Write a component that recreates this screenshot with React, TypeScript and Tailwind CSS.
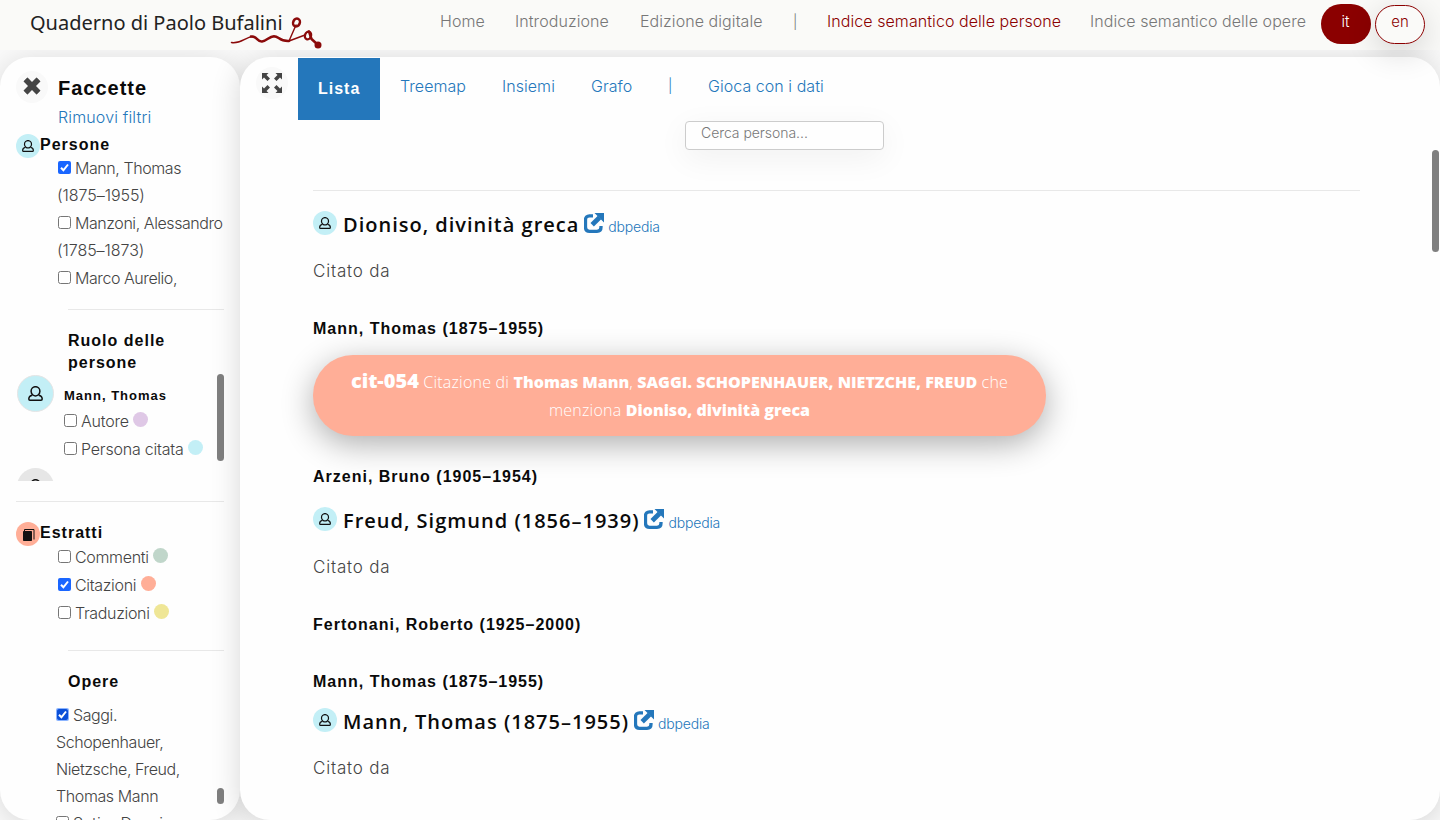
import React from "react";

const LIGHT = "font-['Inter','Liberation_Sans',sans-serif] font-light";
const BOLD = "font-['Liberation_Sans',Arial,sans-serif] font-bold tracking-[1px] text-[#0a0a0a]";

function PersonIcon({ className }: { className: string }) {
  return (
    <svg viewBox="0 0 15 15" className={className} fill="none" stroke="#111" strokeWidth="1.5">
      <path d="M4.9 9C3.7 8.1 3.1 6.8 3.1 5.2a4.4 4.5 0 0 1 8.8 0c0 1.600-.6 2.900-1.800 3.800-.8.600-1.600.9-2.600.9s-1.800-.3-2.600-.9z" />
      <path d="M4.300 9.200C2 9.700.800 11 .8 13c0 .8.400 1.200 1.200 1.200h11c.8 0 1.200-.4 1.200-1.200 0-2-1.200-3.300-3.500-3.800" />
    </svg>
  );
}

function BookIcon() {
  return (
    <svg viewBox="0 0 12 12" className="mt-0.5 ml-px size-3" fill="none" stroke="#111">
      <path d="M.5 2.500h8v9h-8z" fill="#111" />
      <path d="M1.500 2V.500h9.500v10" />
    </svg>
  );
}

function OpenIcon() {
  return (
    <svg viewBox="0 0 20 20" className="size-5" fill="none" stroke="#2477bb">
      <path d="M9 2.800H5.500c-2.500 0-4 1.500-4 4v7.500c0 2.500 1.500 4 4 4h7.500c2.500 0 4-1.500 4-4V13" strokeWidth="3.300" />
      <path d="M8.200 11.800 15.500 4.500" strokeWidth="4.800" />
      <path d="M10.500 0H20v9.500z" fill="#2477bb" stroke="none" />
    </svg>
  );
}

function RemoveIcon() {
  return (
    <svg viewBox="0 0 18 18" className="mb-0.5 size-[18px]">
      <path d="M4 .8.800 4q-.4.400 0 .8L5 9 .800 13.200q-.4.400 0 .8L4 17.200q.4.400.8 0L9 13l4.200 4.200q.4.400.8 0l3.200-3.200q.4-.4 0-.8L13 9l4.200-4.200q.4-.4 0-.8L14 .8q-.4-.4-.8 0L9 5 4.800.8Q4.400.4 4 .8z" fill="#444" />
    </svg>
  );
}

function FullscreenIcon() {
  return (
    <svg viewBox="0 0 20 20" className="size-5" fill="#444">
      <path d="M0 0h6.500L4.500 2 8 5.500 5.500 8 2 4.500 0 6.500z" />
      <path d="M0 0h6.500L4.500 2 8 5.500 5.500 8 2 4.500 0 6.500z" transform="rotate(90 10 10)" />
      <path d="M0 0h6.500L4.500 2 8 5.500 5.500 8 2 4.500 0 6.500z" transform="rotate(180 10 10)" />
      <path d="M0 0h6.500L4.500 2 8 5.500 5.500 8 2 4.500 0 6.500z" transform="rotate(270 10 10)" />
    </svg>
  );
}

function Check({ on = false, focus = false }: { on?: boolean; focus?: boolean }) {
  return (
    <svg viewBox="0 0 13 13" className="mr-1 inline-block size-[13px] align-[0px]">
      {on ? (
        <>
          <rect width="13" height="13" rx="2" fill={focus ? "#8bb4ff" : "#1a66ff"} />
          {focus && <rect x="1" y="1" width="11" height="11" rx="2" fill="#0b50d8" />}
          <path d="M3 6.800 5.400 9.300 10 3.500" fill="none" stroke="#fff" strokeWidth="2" />
        </>
      ) : (
        <rect x=".5" y=".5" width="12" height="12" rx="2" fill="#fff" stroke="#767676" />
      )}
    </svg>
  );
}

function Dot({ color }: { color: string }) {
  return <span className={`ml-[4.5px] inline-block size-[15px] rounded-full align-[0px] ${color}`} />;
}

function Entry({ name }: { name: string }) {
  return (
    <>
      <div className="flex h-11 items-center">
        <span className="mb-1 flex size-6 items-center justify-center rounded-full bg-[#c3eff6]">
          <PersonIcon className="size-3" />
        </span>
        <h2 className="ml-1.5 font-['Open_Sans',sans-serif] text-[20px] font-semibold tracking-[1px] text-[#0a0a0a]">{name}</h2>
        <span className="mb-1 ml-[4.5px]">
          <OpenIcon />
        </span>
        <a className={`${LIGHT} mt-0.5 ml-[4.5px] text-[14px] tracking-[-0.2px] text-[#2477bb]`}>dbpedia</a>
      </div>
      <p className={`${LIGHT} flex h-[46px] items-center pt-[3px] text-[17px] tracking-[0.8px] text-[#444]`}>Citato da</p>
    </>
  );
}

function Logo() {
  return (
    <div className="relative h-[50px] w-[300px] pl-[30px]">
      <span className="font-['Noto_Sans',sans-serif] text-[20px] leading-[46px] font-normal whitespace-nowrap text-[#222]">Quaderno di Paolo Bufalini</span>
      <svg viewBox="0 0 96 36" className="absolute top-[14px] left-[229px] h-9 w-24" fill="none" stroke="#8b0a0a" strokeLinecap="round">
        <path d="M2.500 28.500C12 30 16 23 24 22.500" strokeWidth="1.500" />
        <path d="M22 22.500c6-1 6 5.500 11 5 5-.6 7-5 12-5.300 5 0 5 5.300 15 4.800" strokeWidth="2.500" />
        <path d="M60 27 67 11M60 27l16-6" strokeWidth="1.400" />
        <ellipse cx="67.500" cy="8.500" rx="3.300" ry="4" strokeWidth="2.500" transform="rotate(25 67.500 8.500)" />
        <ellipse cx="79" cy="21.500" rx="3" ry="4" strokeWidth="2.300" transform="rotate(20 79 21.500)" />
        <path d="M80 17.500 82.500 25 88 30" strokeWidth="2.500" />
        <circle cx="89" cy="31" r="3.500" fill="#8b0a0a" stroke="none" />
      </svg>
    </div>
  );
}

export default function App() {
  return (
    <div className="relative flex h-[820px] w-[1440px] flex-col overflow-hidden bg-[#fafafa]">
      <header className={`${LIGHT} relative z-10 flex h-[50px] shrink-0 bg-[#fafaf8] text-[16px] text-[#777]`}>
        <Logo />
        <nav className="ml-[140px] flex h-[42px] items-center tracking-[0.07px] whitespace-nowrap">
          <a className="w-[75px]">Home</a>
          <a className="w-[125px]">Introduzione</a>
          <a className="w-[153px]">Edizione digitale</a>
          <a className="w-[34px] text-[14px]">|</a>
          <a className="w-[263px] text-[#8b0000]">Indice semantico delle persone</a>
          <a className="w-[231px]">Indice semantico delle opere</a>
        </nav>
        <a className="mt-1 flex h-10 w-[50px] justify-center rounded-[20px] bg-[#8b0000] pt-[7px] pr-px text-[15px] text-white">it</a>
        <a className="mt-[5px] ml-1 flex h-[39px] w-[50px] justify-center rounded-[20px] border border-[#8b0000] pt-[5px] text-[15px] text-[#8b0000] shadow-[0_8px_32px_rgba(0,0,0,0.16)]">en</a>
      </header>

      <div className="mt-[7px] flex h-[763px]">
        <aside className={`${LIGHT} relative w-60 shrink-0 overflow-hidden rounded-[30px] bg-[#fefefe] text-[16px] tracking-[-0.4px] text-[#444] shadow-[0_4px_30px_rgba(0,0,0,0.14)]`}>
          <div className="flex h-[48px] items-center pt-3 pl-4">
            <span className="flex size-8 items-center justify-center rounded-full bg-[#f9f9f9]">
              <RemoveIcon />
            </span>
            <h1 className={`${BOLD} ml-2.5 pt-0.5 text-[20px]`}>Faccette</h1>
          </div>
          <a className="flex h-[24px] items-center pl-[58px] tracking-[0.15px] text-[#2477bb]">Rimuovi filtri</a>

          <div className="mt-[5px] flex h-6 pl-4">
            <span className="flex size-6 items-center justify-center rounded-full bg-[#c3eff6]">
              <PersonIcon className="size-3" />
            </span>
            <h3 className={`${BOLD} text-[16px] leading-[22px]`}>Persone</h3>
          </div>
          <div className="-mt-[3px] h-[137px] overflow-hidden pl-[58px] leading-[27.400px] tracking-[-0.43px] whitespace-nowrap">
            <p><Check on />Mann, Thomas</p>
            <p className="-ml-px tracking-[-0.05px]">(1875–1955)</p>
            <p><Check />Manzoni, Alessandro</p>
            <p className="-ml-px tracking-[-0.05px]">(1785–1873)</p>
            <p><Check />Marco Aurelio,</p>
          </div>
          <div className="mt-[17px] mr-4 ml-[68px] border-t border-[#e8e8e8]" />

          <h3 className={`${BOLD} mt-[20px] pl-[68px] text-[16px] leading-[22px]`}>Ruolo delle<br />persone</h3>
          <div className="mr-4 ml-4 flex h-[107px]">
            <div className="w-[48px] overflow-hidden pt-[1px] pl-[1px]">
              <span className="flex size-[37px] items-center justify-center rounded-full border border-[#e5e5e5] bg-[#c3eff6]">
                <PersonIcon className="size-[15px]" />
              </span>
              <span className="mt-[56px] flex size-[37px] items-center justify-center rounded-full bg-[#e6e6e6]">
                <PersonIcon className="size-[15px]" />
              </span>
            </div>
            <div className="grow leading-7 tracking-[-0.2px] whitespace-nowrap">
              <p className={`${BOLD} mt-[12px] mb-px text-[13px] leading-[20px]`}>Mann, Thomas</p>
              <p><Check />Autore<Dot color="bg-[#dfc8e6]" /></p>
              <p><Check />Persona citata<Dot color="bg-[#c3eff6]" /></p>
            </div>
            <span className="h-[87px] w-[7px] shrink-0 rounded-full bg-[#7f7f7f]" />
          </div>
          <div className="mx-4 mt-[20px] border-t border-[#e8e8e8]" />

          <div className="mt-[20px] flex h-6 pl-4">
            <span className="flex size-6 items-center justify-center rounded-full bg-[#ffae97]">
              <BookIcon />
            </span>
            <h3 className={`${BOLD} text-[16px] leading-[22px]`}>Estratti</h3>
          </div>
          <div className="-mt-[3px] pl-[58px] leading-7 tracking-[-0.33px]">
            <p><Check />Commenti<Dot color="bg-[#c0d6ca]" /></p>
            <p><Check on />Citazioni<Dot color="bg-[#ffae97]" /></p>
            <p><Check />Traduzioni<Dot color="bg-[#efe696]" /></p>
          </div>
          <div className="mt-[23px] mr-4 ml-[68px] border-t border-[#e8e8e8]" />

          <h3 className={`${BOLD} mt-[20px] pl-[68px] text-[16px] leading-[22px]`}>Opere</h3>
          <div className="mt-[9px] mr-4 flex h-32 pl-14">
            <div className="grow leading-[27px] whitespace-nowrap">
              <p><Check on focus />Saggi.</p>
              <p>Schopenhauer,</p>
              <p>Nietzsche, Freud,</p>
              <p>Thomas Mann</p>
              <p className="tracking-[0.1px]"><Check />Satiro Danzi</p>
            </div>
            <span className="mt-[86px] h-4 w-[7px] shrink-0 rounded-full bg-[#7f7f7f]" />
          </div>
        </aside>

        <main className="relative grow rounded-[30px] bg-[#fefefe] shadow-[0_4px_30px_rgba(0,0,0,0.16)]">
          <div className="flex h-[64px] pt-px pl-4">
            <span className="mt-[9px] flex size-8 items-center justify-center rounded-full bg-[#f9f9f9]">
              <FullscreenIcon />
            </span>
            <a className={`${BOLD} ml-[10px] h-[62px] w-[82px] bg-[#2477bb] pl-5 text-[16px] leading-[61px] text-white!`}>Lista</a>
            <nav className={`${LIGHT} flex h-[55px] items-center pl-5 text-[16px] tracking-[0.05px] whitespace-nowrap text-[#2477bb]`}>
              <a className="w-[102px]">Treemap</a>
              <a className="w-[89px]">Insiemi</a>
              <a className="w-[77px]">Grafo</a>
              <a className="w-[40px] text-[14px]">|</a>
              <a>Gioca con i dati</a>
            </nav>
          </div>
          <div className={`${LIGHT} ml-[445px] h-[29px] w-[199px] rounded-[4px] border border-[#ccc] bg-[#fefefe] pl-[15px] text-[14px] leading-[21px] tracking-[-0.05px] text-[#777] shadow-[0_8px_32px_rgba(0,0,0,0.06)]`}>Cerca persona...</div>
          <div className="mt-[40px] mr-20 ml-[73px] border-t border-[#e8e8e8]" />
          <div className="pt-3 pl-[73px]">
            <Entry name="Dioniso, divinità greca" />
            <h4 className={`${BOLD} mt-[25px] text-[16px] leading-[22px]`}>Mann, Thomas (1875–1955)</h4>
            <div className="mt-[15px] flex h-[81px] w-[733px] justify-center rounded-[40px] bg-[#ffae97] pt-[12px] text-center font-['Open_Sans',sans-serif] text-[16px] leading-7 font-light text-white shadow-[0_8px_32px_rgba(0,0,0,0.32)]">
              <p className="tracking-[0.22px]">
                <b className="text-[20px] font-extrabold tracking-normal">cit-054</b> Citazione di <b className="font-extrabold tracking-normal">Thomas Mann</b>, <b className="font-extrabold tracking-normal">SAGGI. SCHOPENHAUER, NIETZCHE, FREUD</b> che
                <br />
                menziona <b className="font-extrabold tracking-normal">Dioniso, divinità greca</b>
              </p>
            </div>
            <h4 className={`${BOLD} mt-[30px] mb-[11px] text-[16px] leading-[22px]`}>Arzeni, Bruno (1905–1954)</h4>
            <Entry name="Freud, Sigmund (1856–1939)" />
            <h4 className={`${BOLD} mt-[25px] text-[16px] leading-[22px]`}>Fertonani, Roberto (1925–2000)</h4>
            <h4 className={`${BOLD} mt-[35px] mb-[7px] text-[16px] leading-[22px]`}>Mann, Thomas (1875–1955)</h4>
            <Entry name="Mann, Thomas (1875–1955)" />
          </div>
          <span className="absolute top-[93px] right-px h-[102px] w-[7px] rounded-full bg-[#7f7f7f]" />
        </main>
      </div>
    </div>
  );
}
